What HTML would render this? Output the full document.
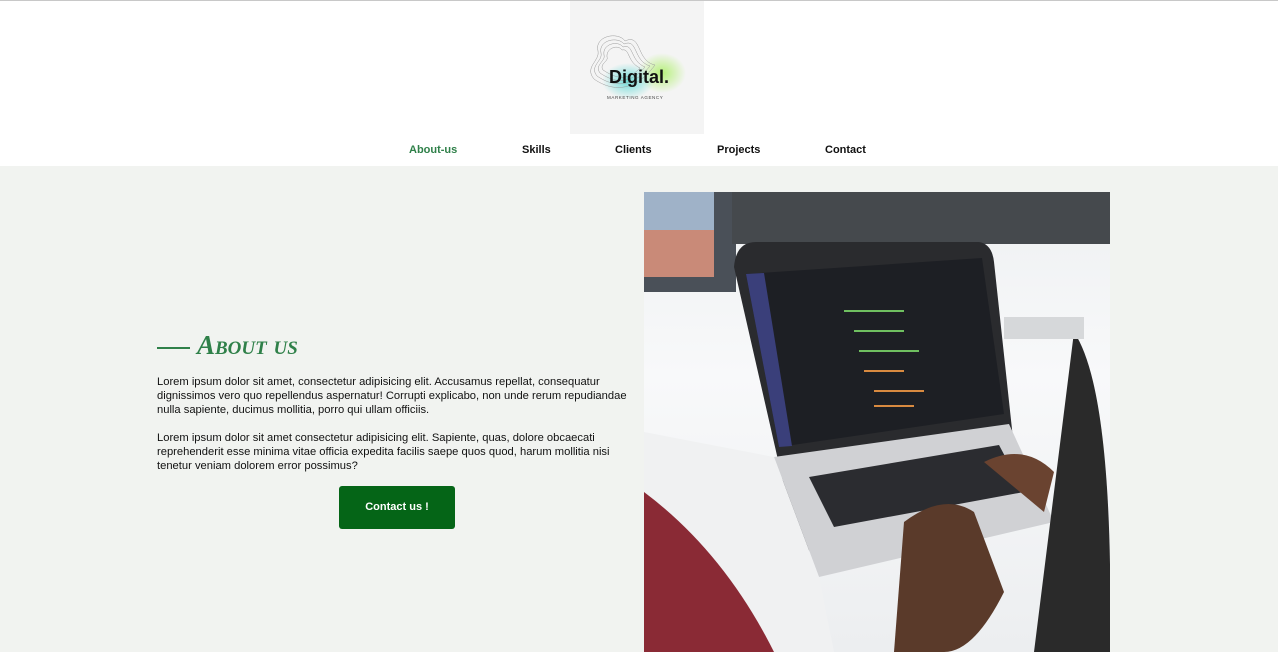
<!DOCTYPE html>
<html><head><meta charset="utf-8"><style>
*{margin:0;padding:0;box-sizing:border-box}
body{width:1278px;height:652px;overflow:hidden;background:#fff;font-family:"Liberation Sans",sans-serif;position:relative}
.top{position:absolute;left:0;top:0;width:1278px;height:1px;background:#c8c8c8}
.logo{position:absolute;left:570px;top:1px;width:134px;height:133px;background:#f4f4f4}
nav a{position:absolute;top:144px;font-size:11px;font-weight:bold;color:#111;text-decoration:none}
.main{position:absolute;left:0;top:166px;width:1278px;height:486px;background:#f1f3f0}
h2{position:absolute;left:157px;top:330px;font-family:"Liberation Serif",serif;font-style:italic;font-weight:bold;font-variant:small-caps;color:#2f8049;font-size:27px;letter-spacing:0px}
h2:before{content:"";display:inline-block;width:33px;height:2px;background:#2f8049;vertical-align:middle;margin-right:7px}
p{position:absolute;left:157px;font-size:11.2px;line-height:14px;color:#111}
.btn{position:absolute;left:339px;top:486px;width:116px;height:43px;background:#056517;color:#fff;border-radius:3px;font-size:11px;font-weight:bold;text-align:center;line-height:43px}
.img{position:absolute;left:644px;top:192px;width:466px;height:460px;overflow:hidden;background:linear-gradient(180deg,#eef0f2 0%,#f8f9fa 40%,#eceef0 100%)}
</style></head><body>
<div class="top"></div>
<div class="logo">
<svg width="134" height="133" viewBox="0 0 134 133">
<defs><radialGradient id="g1"><stop offset="0" stop-color="#b6f07a"/><stop offset="1" stop-color="#b6f07a" stop-opacity="0"/></radialGradient>
<radialGradient id="g2"><stop offset="0" stop-color="#6fdcd8"/><stop offset="1" stop-color="#6fdcd8" stop-opacity="0"/></radialGradient></defs>
<ellipse cx="92" cy="72" rx="24" ry="20" fill="url(#g1)"/>
<ellipse cx="58" cy="80" rx="26" ry="18" fill="url(#g2)"/>
<g fill="none" stroke="#999" stroke-width="0.5">
<path d="M28 50 C24 35 48 30 55 40 C72 32 66 60 85 64 C62 95 38 88 24 78 C14 66 30 60 28 50Z"/>
<path d="M31 52 C28 39 48 35 54 43 C68 37 63 60 80 65 C60 90 40 84 27 75 C19 65 33 60 31 52Z"/>
<path d="M34 54 C32 43 48 39 53 46 C64 42 60 60 75 66 C58 86 42 80 30 72 C24 64 36 60 34 54Z"/>
<path d="M37 56 C36 47 48 43 52 49 C60 47 57 61 70 67 C56 82 44 76 33 69 C29 63 39 60 37 56Z"/>
</g>
<text x="39" y="82" font-family="Liberation Sans" font-weight="bold" font-size="18" fill="#111">Digital.</text>
<text x="37" y="98" font-family="Liberation Sans" font-size="4.5" fill="#444" letter-spacing="0.6">MARKETING AGENCY</text>
</svg></div>
<nav><a style="left:409px;color:#2f8049">About-us</a><a style="left:522px">Skills</a><a style="left:615px">Clients</a><a style="left:717px">Projects</a><a style="left:825px">Contact</a></nav>
<div class="main"></div>
<h2>About us</h2>
<p style="top:375px">Lorem ipsum dolor sit amet, consectetur adipisicing elit. Accusamus repellat, consequatur<br>dignissimos vero quo repellendus aspernatur! Corrupti explicabo, non unde rerum repudiandae<br>nulla sapiente, ducimus mollitia, porro qui ullam officiis.</p>
<p style="top:431px">Lorem ipsum dolor sit amet consectetur adipisicing elit. Sapiente, quas, dolore obcaecati<br>reprehenderit esse minima vitae officia expedita facilis saepe quos quod, harum mollitia nisi<br>tenetur veniam dolorem error possimus?</p>
<div class="btn">Contact us !</div>
<div class="img">
<svg width="466" height="460" viewBox="0 0 466 460">
<rect x="0" y="0" width="92" height="100" fill="#4a5058"/>
<rect x="0" y="0" width="70" height="85" fill="#c98a78"/>
<rect x="0" y="0" width="70" height="38" fill="#9fb2c8"/>
<rect x="88" y="0" width="378" height="52" fill="#45494d"/>
<path d="M90 75 Q92 50 112 50 L335 50 Q348 52 350 70 L378 330 L155 360 Z" fill="#2a2b2e"/>
<path d="M102 82 L338 66 L360 222 L135 255 Z" fill="#1d1f24"/>
<path d="M102 82 L120 81 L148 254 L135 255 Z" fill="#3a3f7a"/>
<g fill="#6fbf60"><rect x="200" y="118" width="60" height="2"/><rect x="210" y="138" width="50" height="2"/><rect x="215" y="158" width="60" height="2"/></g>
<g fill="#d88a40"><rect x="220" y="178" width="40" height="2"/><rect x="230" y="198" width="50" height="2"/><rect x="230" y="213" width="40" height="2"/></g>
<path d="M130 265 L365 232 L410 330 L175 385 Z" fill="#d0d1d4"/>
<path d="M165 285 L355 253 L380 300 L190 335 Z" fill="#2b2c30"/>
<path d="M0 240 L130 265 L175 385 L190 460 L0 460 Z" fill="#f0f1f2"/>
<path d="M0 300 Q80 360 130 460 L0 460 Z" fill="#8a2a35"/>
<path d="M260 330 Q300 300 330 320 L360 400 Q330 460 300 460 L250 460 Z" fill="#5a3a2a"/>
<path d="M340 270 Q380 250 410 280 L400 320 Z" fill="#6a4330"/>
<path d="M430 140 Q470 200 466 460 L390 460 Q410 300 430 140Z" fill="#2a2a2a"/>
<rect x="360" y="125" width="80" height="22" fill="#d6d8da"/>
</svg></div>
</body></html>
